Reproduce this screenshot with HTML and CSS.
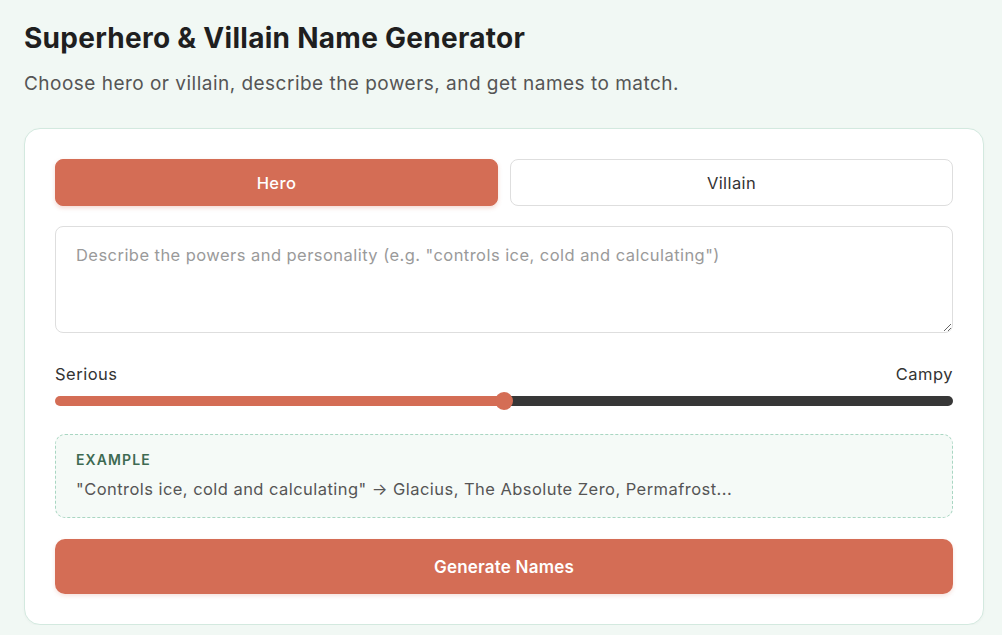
FILE: index.html
```html
<!DOCTYPE html>
<html lang="en">
<head>
    <meta charset="UTF-8">
    <meta name="viewport" content="width=device-width, initial-scale=1.0">
    <title>Superhero &amp; Villain Name Generator</title>
    <link rel="stylesheet" href="styles.css">
</head>
<body>
    <div class="page">
        <h1>Superhero &amp; Villain Name Generator</h1>
        <p class="subtitle">Choose hero or villain, describe the powers, and get names to match.</p>

        <div class="card">
            <div class="toggle">
                <button class="toggle-btn active" type="button">Hero</button>
                <button class="toggle-btn" type="button">Villain</button>
            </div>

            <textarea class="powers" placeholder="Describe the powers and personality (e.g. &quot;controls ice, cold and calculating&quot;)"></textarea>

            <div class="tone">
                <div class="tone-labels">
                    <span>Serious</span>
                    <span>Campy</span>
                </div>
                <input class="tone-range" type="range" min="0" max="100" value="50">
            </div>

            <div class="example">
                <div class="example-title">Example</div>
                <div class="example-text">"Controls ice, cold and calculating" &rarr; Glacius, The Absolute Zero, Permafrost...</div>
            </div>

            <button class="generate" type="button">Generate Names</button>
        </div>
    </div>
</body>
</html>
```

FILE: styles.css
```css
body {
    font-family: Inter, "Noto Sans", sans-serif;
    background-color: #f1f8f4;
    margin: 0;
    padding: 0;
    color: #222;
}
.page {
    padding: 20px 18px 0 24px;
}
h1 {
    font-size: 28px;
    font-weight: 700;
    letter-spacing: 0.28px;
    margin: 0 0 14px 0;
    line-height: 36px;
    color: #1f1f1f;
}
.subtitle {
    font-size: 19px;
    letter-spacing: 0.48px;
    color: #555;
    margin: 0 0 30px 0;
    line-height: 28px;
}
.card {
    background: #fff;
    border: 1px solid #d3e9df;
    border-radius: 16px;
    padding: 30px;
    display: flex;
    flex-direction: column;
    gap: 20px;
    box-shadow: 0 1px 3px rgba(0,0,0,0.03);
}
.toggle {
    display: flex;
    gap: 12px;
}
.toggle-btn {
    flex: 1;
    height: 47px;
    border: 1px solid #dedede;
    border-radius: 8px;
    background: #fff;
    font-family: inherit;
    font-size: 16.5px;
    font-weight: 400;
    letter-spacing: 0.4px;
    color: #333;
    cursor: pointer;
}
.toggle-btn.active {
    background: #d46d55;
    border-color: #d46d55;
    color: #fff;
    font-weight: 500;
    box-shadow: 0 2px 4px rgba(212,109,85,0.25);
}
.powers {
    height: 107px;
    box-sizing: border-box;
    border: 1px solid #dedede;
    border-radius: 8px;
    padding: 16px 20px;
    font-family: inherit;
    font-size: 16.5px;
    letter-spacing: 0.45px;
    line-height: 24px;
    color: #333;
}
.powers::placeholder {
    color: #9a9a9a;
}
.tone {
    padding-top: 9px;
    margin-bottom: 8px;
}
.tone-labels {
    display: flex;
    justify-content: space-between;
    font-size: 16.5px;
    letter-spacing: 0.5px;
    line-height: 24px;
    color: #333;
}
.tone-range {
    -webkit-appearance: none;
    appearance: none;
    width: 100%;
    height: 10px;
    margin: 10px 0 0 0;
    border-radius: 5px;
    background: linear-gradient(to right, #d46d55 50%, #373737 50%);
    outline: none;
    display: block;
}
.tone-range::-webkit-slider-thumb {
    -webkit-appearance: none;
    appearance: none;
    width: 18px;
    height: 18px;
    border-radius: 50%;
    background: #d46d55;
    border: none;
    cursor: pointer;
}
.example {
    border: 1px dashed #a9d6c2;
    border-radius: 10px;
    background: #f5faf7;
    padding: 15px 20px 16px 20px;
}
.example-title {
    font-size: 14px;
    font-weight: 600;
    text-transform: uppercase;
    letter-spacing: 1.1px;
    color: #3e6a52;
    line-height: 20px;
    margin-bottom: 7px;
}
.example-text {
    font-size: 16.5px;
    letter-spacing: 0.45px;
    line-height: 24px;
    color: #555;
}
.generate {
    height: 55px;
    margin-top: 1px;
    border: none;
    border-radius: 10px;
    background: #d46d55;
    color: #fff;
    font-family: inherit;
    font-size: 17px;
    font-weight: 600;
    letter-spacing: 0.2px;
    cursor: pointer;
    box-shadow: 0 2px 4px rgba(212,109,85,0.2);
}
```
